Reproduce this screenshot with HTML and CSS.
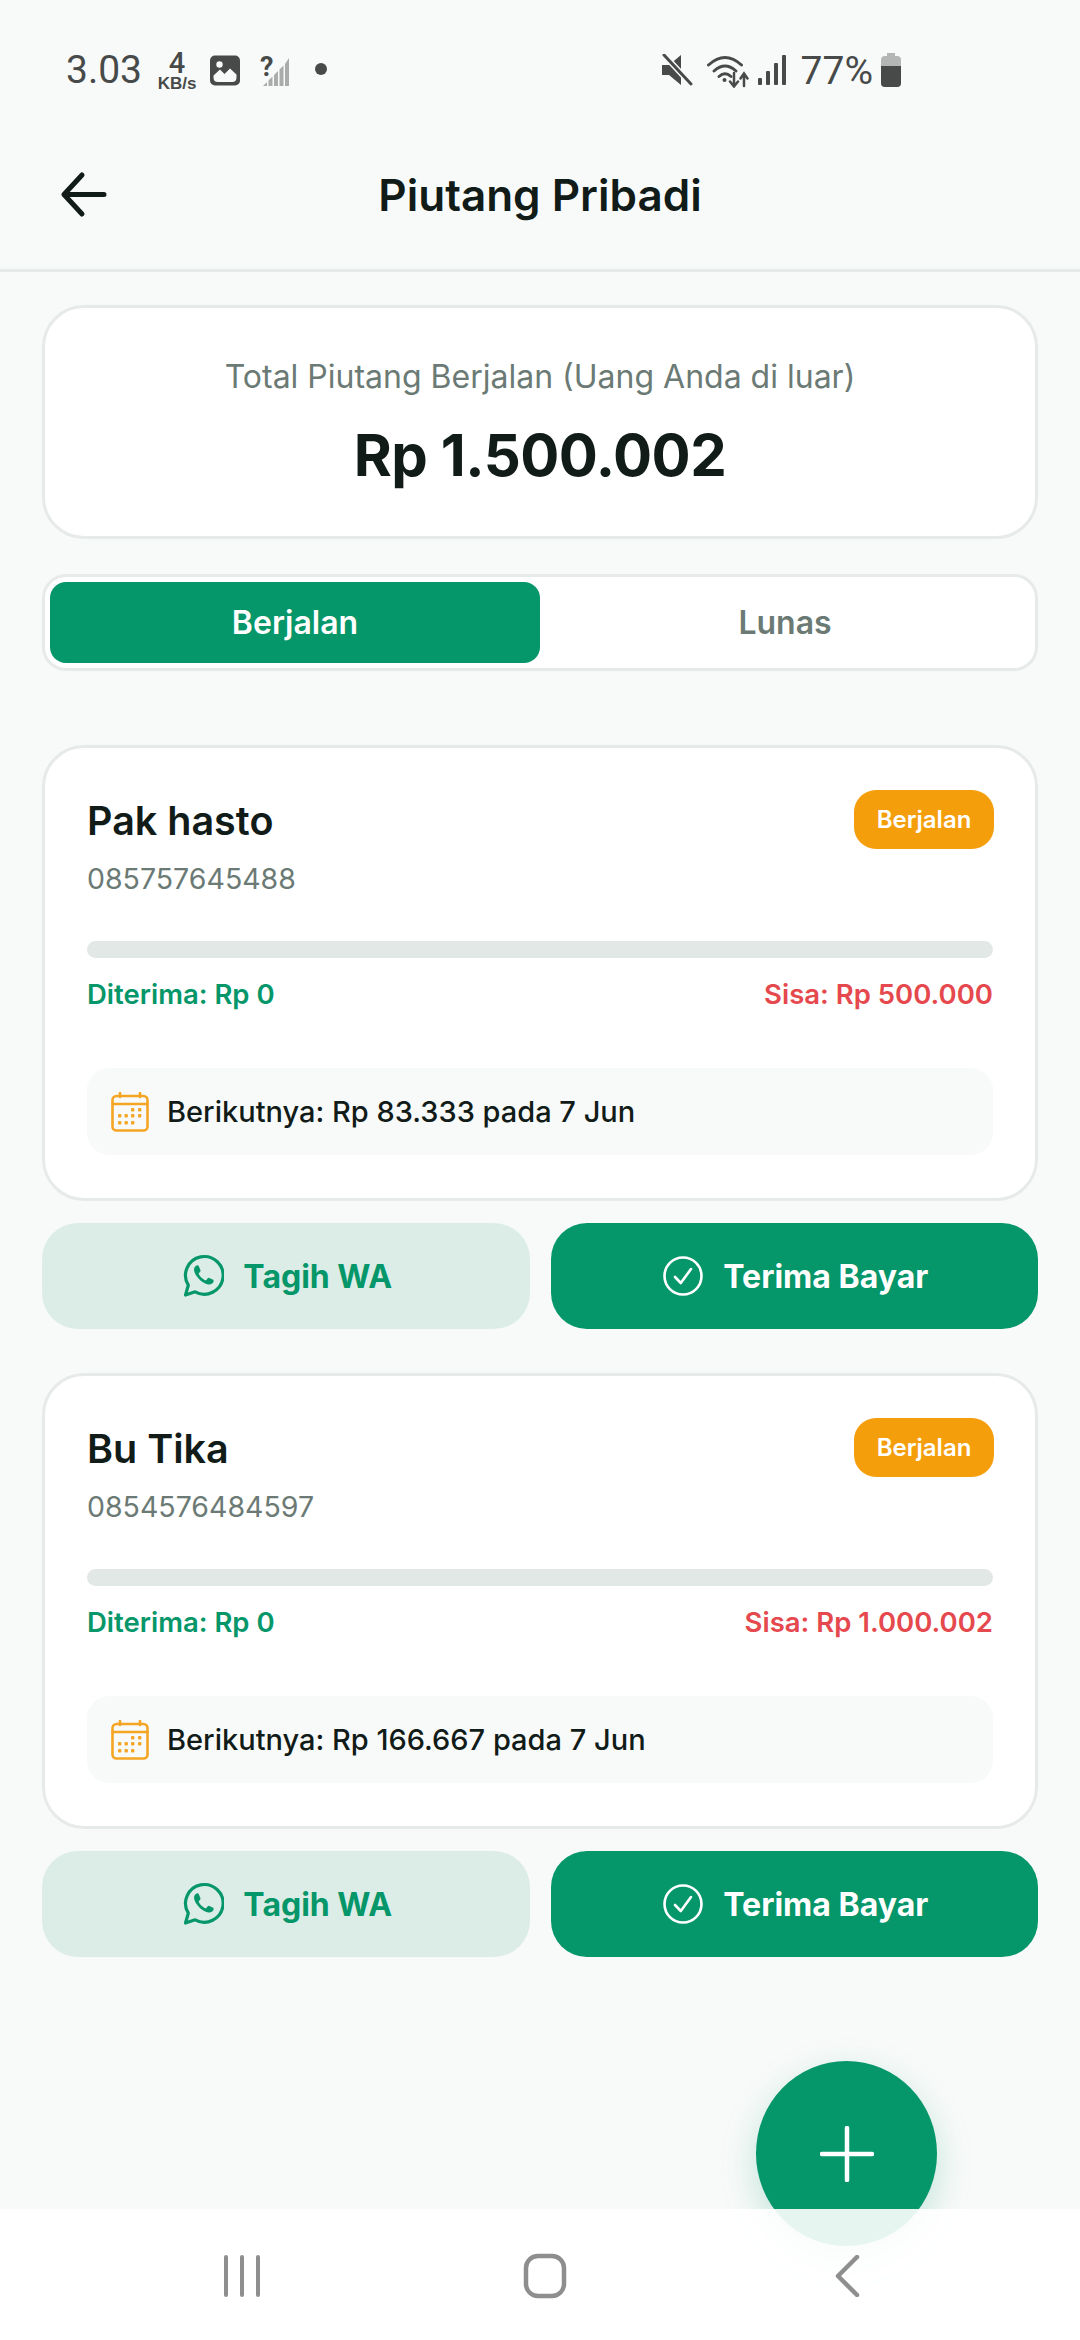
FILE: index.html
```html
<!DOCTYPE html>
<html lang="id">
<head>
<meta charset="utf-8">
<title>Piutang Pribadi</title>
<link rel="stylesheet" href="styles.css">
</head>
<body>
<div class="screen">
  <div class="status">
    <div class="status-left">
      <span class="clock">3.03</span>
      <span class="speed"><b>4</b><i>KB/s</i></span>
      <svg class="ic-img" viewBox="0 0 30 30"><rect width="30" height="30" rx="5" fill="#474a49"/><circle cx="9.500" cy="9" r="3.200" fill="#f8faf9"/><path d="M3.500 22 L3.500 20 L10 14 L14.500 18.500 L20 13 L26.500 19 L26.500 22 Q26.500 26.500 22 26.500 L8 26.500 Q3.500 26.500 3.500 22 Z" fill="#f8faf9"/></svg>
      <span class="nosim">
        <svg class="ic-nosim" viewBox="0 0 30 32"><path d="M3 31 L7 27 L7 31 Z M8.500 31 L8.500 25.500 L12.500 21.500 L12.500 31 Z M14 31 L14 20 L18 16 L18 31 Z M19.500 31 L19.500 14.500 L23.500 10.500 L23.500 31 Z M25 31 L25 9 L29 3 L29 31 Z" fill="#a9acab"/></svg>
        <span class="ic-q">?</span>
      </span>
      <span class="dot"></span>
    </div>
    <div class="status-right">
      <svg class="ic-mute" viewBox="0 0 32 32"><path d="M1 11 L8 11 L20 1 L20 31 L8 21 L1 21 Z" fill="#474a49"/><path d="M3 1 L31 31" stroke="#f8faf9" stroke-width="6"/><path d="M3 1 L30 30" stroke="#474a49" stroke-width="3" stroke-linecap="round"/></svg>
      <svg class="ic-wifi" viewBox="0 0 42 34" fill="none" stroke="#474a49" stroke-linecap="round"><path d="M1.500 11 Q18 -4 34.500 11" stroke-width="3"/><path d="M7 17 Q18 7 29 17" stroke-width="3"/><path d="M12 22.500 Q18 17 24 22.500" stroke-width="3"/><circle cx="17.500" cy="26" r="2" fill="#474a49" stroke="none"/><path d="M27 19 V32 M23 27.500 L27 32.500 L31 27.500" stroke-width="2.500"/><path d="M37 32 V20 M33.500 24.500 L37 19.500 L40.500 24.500" stroke-width="2.500"/></svg>
      <svg class="ic-signal" viewBox="0 0 28 32" fill="#474a49"><rect x="0" y="24" width="4" height="7" rx="1"/><rect x="8" y="17" width="4" height="14" rx="1"/><rect x="16" y="9" width="4" height="22" rx="1"/><rect x="24" y="1" width="4" height="30" rx="1"/></svg>
      <span class="battery-text">77%</span>
      <svg class="ic-batt" viewBox="0 0 22 34"><path d="M7 0 H15 V3 H17 Q21 3 21 7 V30 Q21 34 17 34 H5 Q1 34 1 30 V7 Q1 3 5 3 H7 Z" fill="#b4b6b5"/><path d="M1 13 H21 V30 Q21 34 17 34 H5 Q1 34 1 30 Z" fill="#474a49"/></svg>
    </div>
  </div>

  <header class="topbar">
    <svg class="back" viewBox="0 0 48 48" fill="none" stroke="#111b18" stroke-width="5" stroke-linecap="round" stroke-linejoin="round"><path d="M44 23.500 H4 M22 4 L4 23.500 L22 43"/></svg>
    <h1 class="title">Piutang Pribadi</h1>
  </header>

  <main class="content">
    <section class="summary">
      <p class="summary-label">Total Piutang Berjalan (Uang Anda di luar)</p>
      <p class="summary-amount">Rp 1.500.002</p>
    </section>

    <div class="tabs">
      <div class="tab tab-active">Berjalan</div>
      <div class="tab">Lunas</div>
    </div>

    <div class="list">
      <article class="entry">
        <div class="card">
          <div class="card-head">
            <div>
              <h2 class="name">Pak hasto</h2>
              <p class="phone">085757645488</p>
            </div>
            <span class="badge">Berjalan</span>
          </div>
          <div class="bar"></div>
          <div class="amounts">
            <span class="got">Diterima: Rp 0</span>
            <span class="left">Sisa: Rp 500.000</span>
          </div>
          <div class="next">
            <svg class="ic-cal" viewBox="0 0 38 40" fill="none"><use href="#cal"/></svg>
            <span>Berikutnya: Rp 83.333 pada 7 Jun</span>
          </div>
        </div>
        <div class="actions">
          <button class="btn btn-soft"><svg class="ic-wa" viewBox="0 0 42 44"><use href="#wa"/></svg>Tagih WA</button>
          <button class="btn btn-solid"><svg class="ic-check" viewBox="0 0 40 40"><use href="#check"/></svg>Terima Bayar</button>
        </div>
      </article>

      <article class="entry">
        <div class="card">
          <div class="card-head">
            <div>
              <h2 class="name">Bu Tika</h2>
              <p class="phone">0854576484597</p>
            </div>
            <span class="badge">Berjalan</span>
          </div>
          <div class="bar"></div>
          <div class="amounts">
            <span class="got">Diterima: Rp 0</span>
            <span class="left">Sisa: Rp 1.000.002</span>
          </div>
          <div class="next">
            <svg class="ic-cal" viewBox="0 0 38 40" fill="none"><use href="#cal"/></svg>
            <span>Berikutnya: Rp 166.667 pada 7 Jun</span>
          </div>
        </div>
        <div class="actions">
          <button class="btn btn-soft"><svg class="ic-wa" viewBox="0 0 42 44"><use href="#wa"/></svg>Tagih WA</button>
          <button class="btn btn-solid"><svg class="ic-check" viewBox="0 0 40 40"><use href="#check"/></svg>Terima Bayar</button>
        </div>
      </article>
    </div>
  </main>

  <button class="fab" aria-label="Tambah"><svg viewBox="0 0 54 56" fill="none" stroke="#fff" stroke-width="4.500" stroke-linecap="round"><path d="M27 2 V54 M2 28 H52"/></svg></button>

  <nav class="navbar">
    <svg class="nav-recent" viewBox="0 0 36 42" fill="none" stroke="#8e8e8e" stroke-width="4" stroke-linecap="round"><path d="M2 2 V40 M18 2 V40 M34 2 V40"/></svg>
    <svg class="nav-home" viewBox="0 0 44 46" fill="none" stroke="#8e8e8e" stroke-width="4.500"><rect x="3" y="3" width="38" height="40" rx="12"/></svg>
    <svg class="nav-back" viewBox="0 0 25 42" fill="none" stroke="#8e8e8e" stroke-width="4.500" stroke-linecap="round" stroke-linejoin="round"><path d="M22 2 L3 21 L22 40"/></svg>
  </nav>
</div>

<svg class="defs" width="0" height="0">
  <defs>
    <g id="cal">
      <rect x="1.500" y="4" width="35" height="34.500" rx="4" stroke="#f5a524" stroke-width="2.600"/>
      <path d="M1.500 12 H36.500 M9 1 V5 M29 1 V5" stroke="#f5a524" stroke-width="2.600" stroke-linecap="round"/>
      <g fill="#f5a524"><rect x="20" y="16" width="3.400" height="3.400" rx="1"/><rect x="27" y="16" width="3.400" height="3.400" rx="1"/><rect x="7" y="22" width="3.400" height="3.400" rx="1"/><rect x="13.500" y="22" width="3.400" height="3.400" rx="1"/><rect x="20" y="22" width="3.400" height="3.400" rx="1"/><rect x="27" y="22" width="3.400" height="3.400" rx="1"/><rect x="7" y="29" width="3.400" height="3.400" rx="1"/><rect x="13.500" y="29" width="3.400" height="3.400" rx="1"/><rect x="20" y="29" width="3.400" height="3.400" rx="1"/></g>
    </g>
    <g id="wa">
      <path d="M3.500 41 L6.300 31.200 A18.800 18.800 0 1 1 13.200 37.800 Z" fill="none" stroke="#059669" stroke-width="3.200" stroke-linejoin="round"/>
      <path d="M14.600 11.500 C13 12.200 11.800 14 12.100 16.500 C12.700 21.500 19.800 29.400 26.200 30.500 C28.700 30.900 30.700 29.700 31.400 28.100 C31.800 27.100 31.700 26.200 31.200 25.800 L27.300 23.900 C26.600 23.600 26.100 23.800 25.700 24.300 L24.400 26 C24 26.400 23.500 26.500 23 26.200 C20.500 25 18.400 23 16.900 20.300 C16.600 19.800 16.700 19.300 17.100 18.900 L18.200 17.600 C18.600 17.100 18.700 16.700 18.400 16.100 L16.700 12 C16.300 11.200 15.400 11.100 14.600 11.500 Z" fill="#059669"/>
    </g>
    <g id="check">
      <circle cx="20" cy="20" r="18.500" fill="none" stroke="#fff" stroke-width="2.600"/>
      <path d="M12 21 L17.800 27 L28 13" fill="none" stroke="#fff" stroke-width="2.600" stroke-linecap="round" stroke-linejoin="round"/>
    </g>
  </defs>
</svg>
</body>
</html>
```
FILE: styles.css
```css
* { box-sizing: border-box; }
html, body { margin: 0; padding: 0; }
body { background: #f8faf9; font-family: Inter, "Noto Sans", sans-serif; color: #111b18; }
p, h1, h2 { margin: 0; }
.defs { position: absolute; }

.screen { position: relative; width: 1080px; height: 2340px; overflow: hidden; display: flex; flex-direction: column; background: #f8faf9; }

/* status bar */
.status { height: 138px; flex: none; display: flex; justify-content: space-between; padding: 47px 178px 0 66px; font-family: Roboto, sans-serif; color: #474a49; }
.status-left, .status-right { display: flex; align-items: flex-start; }
.clock { font-size: 39px; line-height: 46px; }
.speed { width: 40px; margin-left: 15px; display: flex; flex-direction: column; align-items: center; font-weight: 700; margin-top: 4px; }
.speed b { font-size: 29px; line-height: 25px; font-weight: 500; }
.speed i { font-style: normal; font-size: 17px; line-height: 16px; white-space: nowrap; font-family: "Liberation Sans", sans-serif; }
.ic-img { width: 30px; height: 31px; margin: 8px 0 0 13px; }
.nosim { position: relative; width: 30px; height: 32px; margin: 8px 0 0 20px; }
.ic-nosim { display: block; width: 30px; height: 32px; }
.ic-q { position: absolute; left: 0; top: 2px; font-size: 27px; line-height: 20px; font-weight: 700; color: #474a49; }
.dot { width: 12px; height: 12px; border-radius: 50%; background: #474a49; margin: 16px 0 0 25px; }
.status-right { padding-top: 6px; }
.ic-mute { width: 32px; height: 32px; margin-top: 1px; }
.ic-wifi { width: 42px; height: 34px; margin-left: 14px; margin-top: 1px; }
.ic-signal { width: 28px; height: 32px; margin-left: 9px; margin-top: 1px; }
.battery-text { font-size: 39px; line-height: 34px; margin-left: 15px; margin-top: 1px; }
.ic-batt { width: 22px; height: 34px; margin-left: 7px; }

/* header */
.topbar { position: relative; flex: none; height: 134px; display: flex; align-items: center; justify-content: center; border-bottom: 3px solid #e6eae8; padding-bottom: 17px; }
.back { position: absolute; left: 60px; top: 33px; width: 48px; height: 48px; }
.title { font-size: 44px; line-height: 52px; font-weight: 600; }

.content { flex: 1; padding: 33px 42px 0; display: flex; flex-direction: column; }

/* summary */
.summary { height: 234px; background: #fff; border: 3px solid #e6eae8; border-radius: 42px; display: flex; flex-direction: column; align-items: center; padding-top: 50px; }
.summary-label { font-size: 32px; line-height: 38px; color: #6b7a74; }
.summary-amount { font-size: 58px; line-height: 70px; font-weight: 700; margin-top: 24px; letter-spacing: -.5px; }

/* tabs */
.tabs { margin-top: 35px; height: 97px; background: #fff; border: 3px solid #e6eae8; border-radius: 24px; padding: 5px; display: grid; grid-template-columns: 1fr 1fr; }
.tab { display: flex; align-items: center; justify-content: center; border-radius: 16px; font-size: 32px; font-weight: 600; color: #6b7a74; }
.tab-active { background: #059669; color: #fff; }

/* loan cards */
.list { margin-top: 74px; display: flex; flex-direction: column; gap: 44px; }
.entry { display: flex; flex-direction: column; gap: 22px; }
.card { height: 456px; background: #fff; border: 3px solid #e6eae8; border-radius: 42px; padding: 42px 42px 0; }
.card-head { display: flex; justify-content: space-between; align-items: flex-start; height: 151px; }
.name { font-size: 39.5px; line-height: 48px; font-weight: 600; margin-top: 7px; }
.phone { font-size: 28.5px; line-height: 36px; color: #6b7a74; margin-top: 16px; }
.badge { width: 140px; height: 59px; background: #f59e0b; border-radius: 22px; color: #fff; font-size: 24px; font-weight: 600; display: flex; align-items: center; justify-content: center; margin-right: -1px; }
.bar { height: 17px; border-radius: 9px; background: #e2e8e5; }
.amounts { display: flex; justify-content: space-between; margin-top: 18px; font-size: 27.5px; line-height: 36px; font-weight: 600; }
.got { color: #059669; }
.left { color: #e5484d; }
.next { margin-top: 56px; height: 87px; background: #f8faf9; border-radius: 22px; display: flex; align-items: center; padding: 0 0 0 24px; font-size: 29px; font-weight: 500; }
.ic-cal { width: 38px; height: 40px; margin-right: 18px; flex: none; }

/* actions */
.actions { display: grid; grid-template-columns: 1fr 1fr; gap: 21px; }
.btn { height: 106px; border: 0; border-radius: 36px; padding: 0 0 0 3px; display: flex; align-items: center; justify-content: center; font: 700 32px Inter, sans-serif; }
.btn-soft { background: #dcede7; color: #059669; }
.btn-solid { background: #059669; color: #fff; }
.ic-wa { width: 42px; height: 44px; margin-right: 19px; }
.ic-check { width: 40px; height: 40px; margin-right: 20px; }

/* fab + nav */
.fab { position: absolute; left: 756px; top: 2061px; width: 181px; height: 185px; border: 0; border-radius: 50%; background: #059669; box-shadow: 0 12px 36px rgba(5,150,105,.22); display: flex; align-items: center; justify-content: center; padding: 0; }
.fab svg { width: 54px; height: 56px; }
.navbar { position: relative; z-index: 2; flex: none; height: 131px; background: rgba(255,255,255,.9); display: flex; align-items: flex-start; padding: 46px 0 0 224px; }
.nav-recent { width: 36px; height: 42px; }
.nav-home { width: 44px; height: 46px; margin: -2px 0 0 263px; }
.nav-back { width: 25px; height: 42px; margin-left: 268px; }
```
